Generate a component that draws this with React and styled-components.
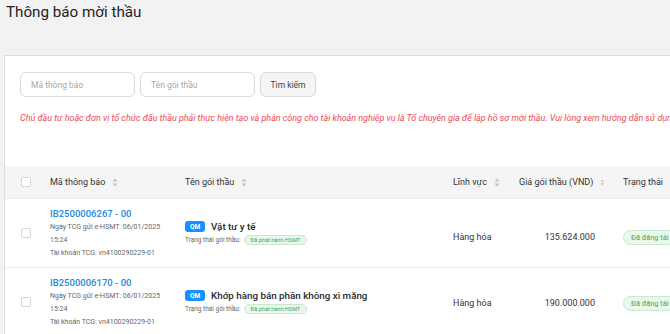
import styled, { createGlobalStyle } from "styled-components";

const GlobalStyle = createGlobalStyle`
  html, body {
    margin: 0;
    padding: 0;
    background: #f2f2f2;
    font-family: Roboto, "Liberation Sans", Arial, sans-serif;
    overflow: hidden;
  }
  * { box-sizing: border-box; }
`;

const Page = styled.div`
  width: 820px;
  padding: 0 0 0 4px;
`;

const Title = styled.h1`
  margin: 0;
  padding: 0 0 0 2px;
  height: 55px;
  font-size: 15.2px;
  line-height: 24px;
  font-weight: 400;
  color: #222;
`;

const Panel = styled.div`
  background: #fff;
  border: 1px solid #dedede;
  border-right: none;
`;

const SearchArea = styled.div`
  padding: 16px 15px 0;
`;

const SearchRow = styled.div`
  display: flex;
  gap: 5px;
`;

const Input = styled.input`
  width: 115px;
  height: 25px;
  border: 1px solid #d9d9d9;
  border-radius: 6px;
  padding: 0 10px;
  font-family: inherit;
  font-size: 8.5px;
  color: #333;
  outline: none;
  &::placeholder { color: #a8a8a8; }
`;

const SearchButton = styled.button`
  width: 56px;
  height: 25px;
  border: 1px solid #d9d9d9;
  border-radius: 6px;
  background: #f5f5f5;
  font-family: inherit;
  font-size: 8.5px;
  color: #444;
`;

const Notice = styled.p`
  margin: 15px 0 0;
  font-size: 8.95px;
  line-height: 12px;
  font-style: italic;
  color: #ea4b55;
  white-space: nowrap;
`;

const Table = styled.div`
  margin-top: 42px;
`;

const Row = styled.div`
  display: grid;
  grid-template-columns: 36px 135px 268px 66px 104px 1fr;
  align-items: center;
  background: ${(p) => (p.$head ? "#f5f5f5" : "#fff")};
  height: ${(p) => (p.$head ? "33px" : "69px")};
  border-bottom: 1px solid #ececec;
`;

const Cell = styled.div`
  padding: ${(p) => p.$pt || 0}px ${(p) => p.$pr || 9}px 0 9px;
  text-align: ${(p) => (p.$right ? "right" : "left")};
  font-size: 9px;
  color: #333;
`;

const HeadLabel = styled.div`
  display: flex;
  align-items: center;
  gap: 7px;
  font-size: 9px;
  color: #333;
  white-space: nowrap;
`;

const Check = styled.span`
  display: block;
  width: 10px;
  height: 10px;
  margin-left: 7px;
  border: 1px solid #d6d6d6;
  border-radius: 2px;
  background: #fff;
`;

const Link = styled.a`
  display: block;
  font-size: 9.5px;
  line-height: 14px;
  font-weight: 500;
  color: #2289e0;
  text-decoration: none;
`;

const Meta = styled.div`
  font-size: 7px;
  line-height: 13px;
  color: #666;
`;

const NameLine = styled.div`
  display: flex;
  align-items: center;
  gap: 6px;
  white-space: nowrap;
`;

const Tag = styled.span`
  display: inline-flex;
  align-items: center;
  justify-content: center;
  width: 20px;
  height: 11px;
  border-radius: 3px;
  background: #1890ff;
  color: #fff;
  font-size: 6.5px;
  font-weight: 700;
`;

const Name = styled.span`
  font-size: 9.8px;
  font-weight: 500;
  color: #2a2a2a;
`;

const StatusLine = styled.div`
  display: flex;
  align-items: center;
  gap: 3px;
  margin-top: 3px;
  font-size: 6.5px;
  color: #666;
`;

const Badge = styled.span`
  display: inline-flex;
  align-items: center;
  height: ${(p) => (p.$small ? "10px" : "15px")};
  padding: 0 ${(p) => (p.$small ? "6px" : "7px")};
  border-radius: 8px;
  border: 1px solid #c6e9cf;
  background: #e9f7ed;
  color: #40a864;
  font-size: ${(p) => (p.$small ? "5.6px" : "7.4px")};
  white-space: nowrap;
`;

const SortIcon = () => (
  <svg width="6" height="9" viewBox="0 0 6 9">
    <path d="M3 0.5L5.5 3.5H0.5Z" fill="#c4c4c4" />
    <path d="M3 8.5L5.5 5.5H0.5Z" fill="#c4c4c4" />
  </svg>
);

const columns = ["Mã thông báo", "Tên gói thầu", "Lĩnh vực", "Giá gói thầu (VND)", "Trạng thái"];

const rows = [
  {
    code: "IB2500006267 - 00",
    name: "Vật tư y tế",
    field: "Hàng hóa",
    price: "135.624.000",
    offset: 8,
  },
  {
    code: "IB2500006170 - 00",
    name: "Khớp hàng bán phần không xi măng",
    field: "Hàng hóa",
    price: "190.000.000",
    offset: 2,
  },
];

export default function App() {
  return (
    <>
      <GlobalStyle />
      <Page>
        <Title>Thông báo mời thầu</Title>
        <Panel>
          <SearchArea>
            <SearchRow>
              <Input placeholder="Mã thông báo" />
              <Input placeholder="Tên gói thầu" />
              <SearchButton>Tìm kiếm</SearchButton>
            </SearchRow>
            <Notice>
              Chủ đầu tư hoặc đơn vị tổ chức đấu thầu phải thực hiện tạo và phân công cho tài khoản nghiệp vụ là Tổ chuyên gia để lập hồ sơ mời thầu. Vui lòng xem hướng dẫn sử dụng tại đây
            </Notice>
          </SearchArea>
          <Table>
            <Row $head>
              <Cell>
                <Check />
              </Cell>
              {columns.map((c) => (
                <Cell key={c}>
                  <HeadLabel>
                    {c}
                    <SortIcon />
                  </HeadLabel>
                </Cell>
              ))}
            </Row>
            {rows.map((r) => (
              <Row key={r.code}>
                <Cell>
                  <Check />
                </Cell>
                <Cell>
                  <Link href="#">{r.code}</Link>
                  <Meta>Ngày TCG gửi e-HSMT: 06/01/2025</Meta>
                  <Meta>15:24</Meta>
                  <Meta>Tài khoản TCG: vn4100290229-01</Meta>
                </Cell>
                <Cell>
                  <NameLine>
                    <Tag>QM</Tag>
                    <Name>{r.name}</Name>
                  </NameLine>
                  <StatusLine>
                    Trạng thái gói thầu:
                    <Badge $small>Đã phát hành HSMT</Badge>
                  </StatusLine>
                </Cell>
                <Cell $pt={r.offset}>{r.field}</Cell>
                <Cell $pt={r.offset} $right $pr={19}>
                  {r.price}
                </Cell>
                <Cell $pt={r.offset}>
                  <Badge>Đã đăng tải</Badge>
                </Cell>
              </Row>
            ))}
          </Table>
        </Panel>
      </Page>
    </>
  );
}
